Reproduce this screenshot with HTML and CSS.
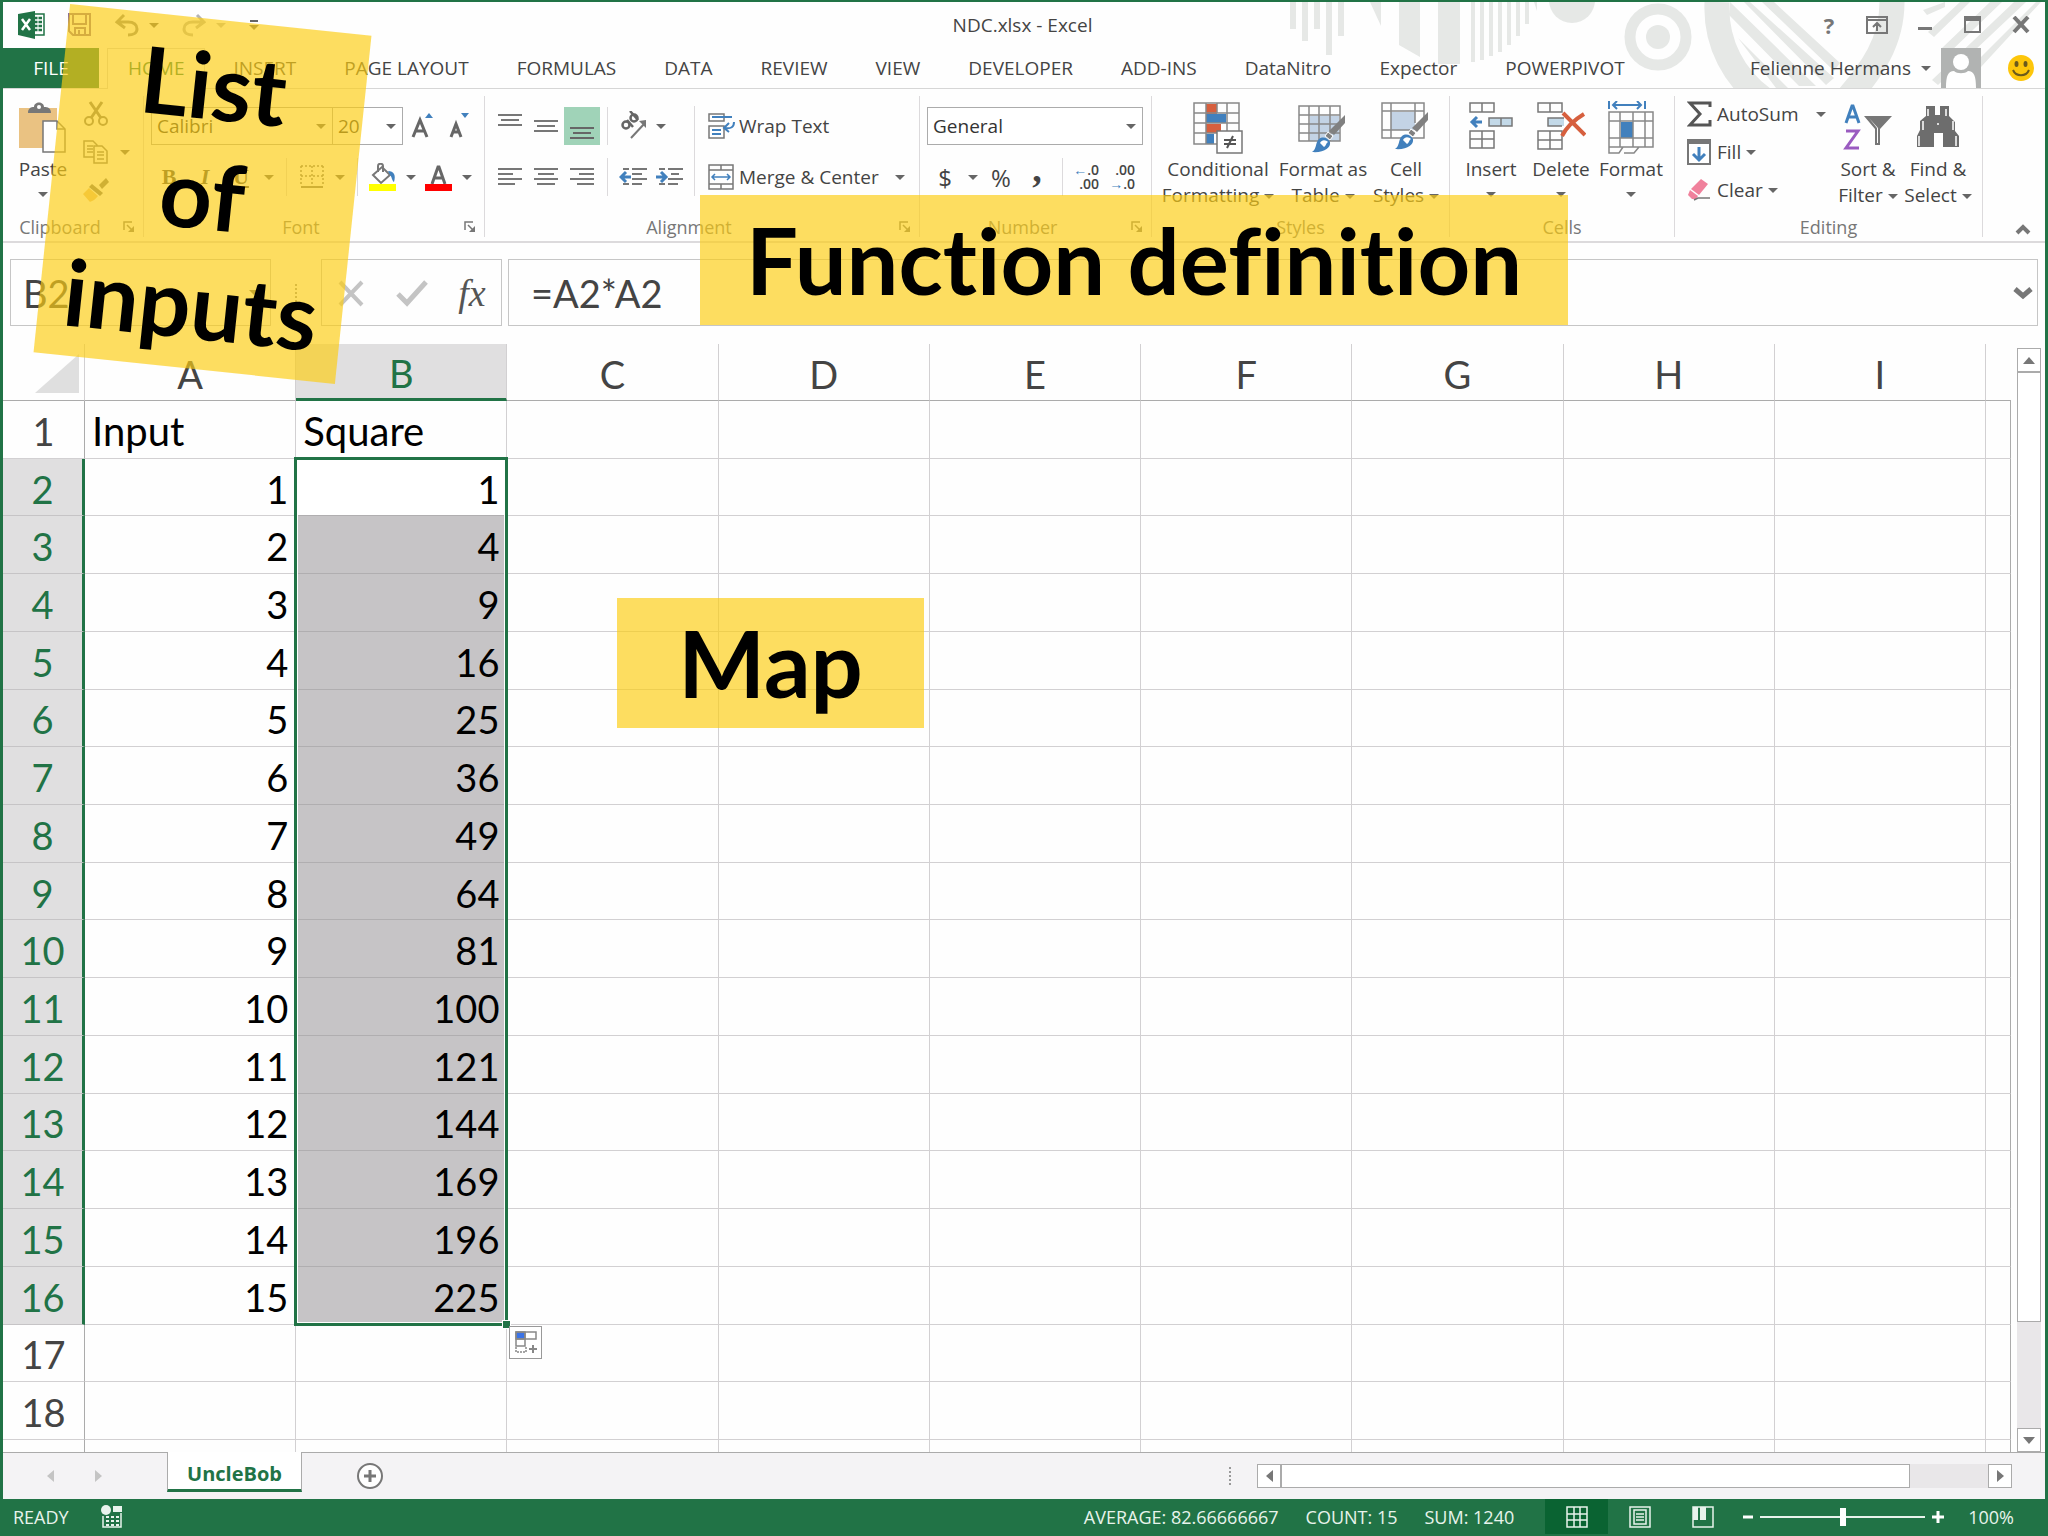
FILE: index.html
```html
<!DOCTYPE html>
<html lang="en">
<head>
    <meta charset="UTF-8">
    <meta name="viewport" content="width=device-width, initial-scale=1.0">
    <title>NDC.xlsx - Excel</title>
    <link rel="stylesheet" href="styles.css">
</head>
<body>
<svg class="defs" aria-hidden="true">
    <symbol id="launcher" viewBox="0 0 12 12">
        <path d="M1 9V1h8" fill="none" stroke="#777" stroke-width="1.5"/>
        <path d="M4 4l5 5" stroke="#777" stroke-width="1.5"/>
        <path d="M11 5v6H5z" fill="#777"/>
    </symbol>
    <symbol id="brush" viewBox="0 0 34 38">
        <path d="M33 0v8L22 20l-5-4z" fill="#808080"/>
        <path d="M16 17l5 4-3 4-5-4z" fill="#808080" stroke="#fff"/>
        <path d="M0 37c5-3 3-9 7-13 4-3 9-1 11 3 1 6-6 11-18 10z" fill="#4180bd"/>
        <path d="M8 28c2-4 6-3 8-1-2 1-2 4-4 5z" fill="#fff"/>
    </symbol>
</svg>
<div class="window">
    <header class="top">
        <svg class="deco" viewBox="1270 2 775 86" aria-hidden="true">
            <g fill="#e6e8e6">
                <path d="M1290 2h6v27h-6zM1302 2h6v39h-6zM1314 2h6v27h-6zM1326 2h6v53h-6zM1338 2h6v34h-6zM1370 2h11v24z"/>
                <path d="M1399 2h21v55l-21-12zM1438 2h22v62h-22zM1471 2h4v60h-4zM1480 2h4v58h-4zM1489 2h4v54h-4zM1498 2h4v50h-4zM1507 2h4v43h-4zM1516 2h4v34h-4zM1525 2h4v22h-4zM1534 2h3v9z"/>
                <circle cx="1572" cy="0" r="23"/>
                <circle cx="1658" cy="37" r="12"/>
                <path d="M1730 2l86 84h-17l-70-71zM1750 2l84 76-8 7-82-83zM1774 2l66 61-6 8-72-69zM1738 38l50 50h-12z"/>
                <path d="M1945 2l-22 8 4 5 18-8zM1960 2l-32 30 6 5 36-35zM1990 2l-48 46 6 6 54-52zM2014 2l-82 78 6 5 88-83zM2036 2l-60 60 5 5 60-65z"/>
            </g>
            <circle cx="1658" cy="37" r="28" fill="none" stroke="#e6e8e6" stroke-width="11"/>
            <path d="M1717 2c-2 42 18 77 48 98M1892 2c0 40-20 68-46 98" fill="none" stroke="#e6e8e6" stroke-width="25"/>
        </svg>
        <div class="titlebar">
            <div class="quick">
                <svg width="28" height="28" viewBox="0 0 28 28"><path d="M12 3h14v21H12z" fill="#fff" stroke="#217346" stroke-width="1.5"/><path d="M15 7h9M15 11h9M15 15h9M15 19h9" stroke="#217346" stroke-width="2.5"/><path d="M20 4v18" stroke="#fff"/><path d="M0 3l17-3v28L0 24z" fill="#217346"/><path d="M4 8l8 11M12 8L4 19" stroke="#fff" stroke-width="2.5"/></svg>
                <button class="q-save" aria-label="Save"><svg width="24" height="24" viewBox="0 0 24 24" fill="none" stroke="#8a6d9c" stroke-width="2"><path d="M1 1h21v21H5l-4-4zM5 1v10h13V1M7 22v-7h10v7M11 17v5"/></svg></button>
                <button class="q-undo" aria-label="Undo"><svg width="24" height="24" viewBox="0 0 24 24" fill="none" stroke="#8a8a8a" stroke-width="3"><path d="M9 2L2 9l8 6M3 9h10c6 0 9 3 9 7s-4 6-9 6"/></svg><span class="caret"></span></button>
                <button class="q-redo" aria-label="Redo"><svg width="24" height="24" viewBox="0 0 24 24" fill="none" stroke="#b5b5b5" stroke-width="3"><path d="M15 2l7 7-8 6M21 9H11c-6 0-9 3-9 7s4 6 9 6"/></svg><span class="caret light"></span></button>
                <button class="q-more" aria-label="Customize Quick Access Toolbar"><span class="bar"></span><span class="caret"></span></button>
            </div>
            <div class="title">NDC.xlsx - Excel</div>
            <div class="wincontrols">
                <button class="help" aria-label="Help">?</button>
                <button aria-label="Ribbon display options"><svg width="22" height="18" viewBox="0 0 22 18" fill="none" stroke="#777" stroke-width="2"><path d="M1 1h20v16H1zM1 4h20M11 15V8M7 11l4-4 4 4"/></svg></button>
                <button aria-label="Minimize"><svg width="16" height="18" viewBox="0 0 16 18"><path d="M1 11h14v3H1z" fill="#777"/></svg></button>
                <button aria-label="Maximize"><svg width="18" height="18" viewBox="0 0 18 18"><path d="M1 1h15v15H1z" fill="none" stroke="#777" stroke-width="2"/><path d="M1 1h15v4H1z" fill="#777"/></svg></button>
                <button aria-label="Close"><svg width="18" height="18" viewBox="0 0 18 18"><path d="M2 1l14 15M16 1L2 16" stroke="#777" stroke-width="4"/></svg></button>
            </div>
        </div>
        <nav class="tabs">
            <a href="#" class="file">FILE</a>
            <a href="#" class="active">HOME</a>
            <a href="#">INSERT</a>
            <a href="#">PAGE LAYOUT</a>
            <a href="#">FORMULAS</a>
            <a href="#">DATA</a>
            <a href="#">REVIEW</a>
            <a href="#">VIEW</a>
            <a href="#">DEVELOPER</a>
            <a href="#">ADD-INS</a>
            <a href="#">DataNitro</a>
            <a href="#">Expector</a>
            <a href="#">POWERPIVOT</a>
            <div class="account">
                <button>Felienne Hermans<span class="caret"></span></button>
                <svg width="40" height="40" viewBox="0 0 40 40"><path d="M0 0h40v40H0z" fill="#b1b3b2"/><circle cx="20" cy="14" r="8" fill="#fff"/><path d="M5 40c0-12 2-17 8-17 3 3 11 3 14 0 6 0 8 5 8 17z" fill="#fff"/></svg>
                <svg width="28" height="28" viewBox="0 0 28 28"><circle cx="14" cy="14" r="13" fill="#fdc60b"/><ellipse cx="9.500" cy="10" rx="2" ry="3" fill="#6b5a1c"/><ellipse cx="18.500" cy="10" rx="2" ry="3" fill="#6b5a1c"/><path d="M6 16c3 7 13 7 16 0" fill="none" stroke="#6b5a1c" stroke-width="2"/></svg>
            </div>
        </nav>
    </header>

    <section class="ribbon">
        <div class="group clipboard">
            <div class="body">
                <button class="big"><svg width="48" height="52" viewBox="0 0 48 52"><path d="M0 6h38v40H0z" fill="#eac282"/><path d="M9 11c0-5 3-6 6-6 0-6 10-6 10 0 4 0 7 1 7 6z" fill="#777"/><circle cx="20" cy="5" r="2" fill="#fff"/><path d="M24 19h14l8 8v23H24z" fill="#fff" stroke="#777" stroke-width="1.500"/><path d="M38 19v8h8" fill="none" stroke="#777" stroke-width="1.500"/></svg>Paste<span class="caret"></span></button>
                <div class="stack">
                    <button aria-label="Cut"><svg width="26" height="26" viewBox="0 0 26 26" fill="none" stroke="#777" stroke-width="2"><circle cx="6" cy="20" r="4"/><circle cx="20" cy="20" r="4"/><path d="M8 17L19 1M18 17L7 1" stroke-width="3"/></svg></button>
                    <button aria-label="Copy"><svg width="26" height="26" viewBox="0 0 26 26" fill="#fff" stroke="#777" stroke-width="1.500"><path d="M1 2h9l4 4v12H1zM4 7h6M4 10h6M4 13h6"/><path d="M11 7h8l5 5v12H11zM14 13h7M14 16h7M14 20h7"/></svg><span class="caret"></span></button>
                    <button aria-label="Format Painter"><svg width="26" height="26" viewBox="0 0 26 26"><path d="M16 8l7-7 3 4-7 7z" fill="#777"/><path d="M9 7l11 9-3 3L6 10z" fill="#777"/><path d="M6 11l9 8c-3 4-6 5-8 6l-7-8z" fill="#eac282"/></svg></button>
                </div>
            </div>
            <div class="label"><span>Clipboard</span><button aria-label="Clipboard settings"><svg width="12" height="12"><use href="#launcher"/></svg></button></div>
        </div>

        <div class="group font">
            <div class="rows">
                <div class="row">
                    <label class="combo fontname"><select aria-label="Font"><option>Calibri</option></select><span class="caret"></span></label>
                    <label class="combo fontsize"><select aria-label="Font size"><option>20</option></select><span class="caret"></span></label>
                    <button class="tool" aria-label="Increase font size"><svg width="24" height="28" viewBox="0 0 24 28"><path d="M2 25L9 8l7 17M4 19h10" fill="none" stroke="#666" stroke-width="3"/><path d="M14 6l4-5 4 5z" fill="#4180bd"/></svg></button>
                    <button class="tool" aria-label="Decrease font size"><svg width="24" height="28" viewBox="0 0 24 28"><path d="M4 25l5-13 5 13M5 20h8" fill="none" stroke="#666" stroke-width="3"/><path d="M14 1h8l-4 5z" fill="#4180bd"/></svg></button>
                </div>
                <div class="row">
                    <button class="tool bold">B</button>
                    <button class="tool italic">I</button>
                    <button class="tool underline">U</button>
                    <button class="drop" aria-label="Underline options"><span class="caret"></span></button>
                    <span class="sep"></span>
                    <button class="tool" aria-label="Borders"><svg width="24" height="24" viewBox="0 0 24 24" fill="none" stroke="#777"><path d="M1 1h22M1 11h22M1 1v20M12 1v20M23 1v20" stroke-dasharray="2 2" stroke-width="1.500"/><path d="M1 22h22" stroke-width="2"/></svg></button>
                    <button class="drop" aria-label="Border options"><span class="caret"></span></button>
                    <span class="sep"></span>
                    <button class="tool" aria-label="Fill color"><svg width="28" height="28" viewBox="0 0 28 28"><path d="M4 12l9-8 8 8-9 8z" fill="#fff" stroke="#777" stroke-width="2"/><path d="M9 9V3c0-3 5-3 5 0v6" fill="none" stroke="#777" stroke-width="2"/><path d="M19 8c6 0 8 4 6 11-2-1-2-5-4-7z" fill="#4180bd"/><path d="M0 21h27v7H0z" fill="#ff0"/></svg></button>
                    <button class="drop" aria-label="Fill color options"><span class="caret"></span></button>
                    <button class="tool" aria-label="Font color"><svg width="28" height="28" viewBox="0 0 28 28"><path d="M7 21l6-17h1l6 17M9 15h9" fill="none" stroke="#666" stroke-width="3"/><path d="M0 21h27v7H0z" fill="red"/></svg></button>
                    <button class="drop" aria-label="Font color options"><span class="caret"></span></button>
                </div>
            </div>
            <div class="label"><span>Font</span><button aria-label="Font settings"><svg width="12" height="12"><use href="#launcher"/></svg></button></div>
        </div>

        <div class="group alignment">
            <div class="body">
                <div class="rows">
                    <div class="row">
                        <button class="tool" aria-label="Top align"><svg width="24" height="28" viewBox="0 0 24 28" stroke="#777" stroke-width="2"><path d="M0 3h24M3 8h18M0 13h24"/></svg></button>
                        <button class="tool" aria-label="Middle align"><svg width="24" height="28" viewBox="0 0 24 28" stroke="#777" stroke-width="2"><path d="M0 9h24M3 14h18M0 19h24"/></svg></button>
                        <button class="tool on" aria-label="Bottom align"><svg width="24" height="28" viewBox="0 0 24 28" stroke="#666" stroke-width="2"><path d="M0 16h24M3 21h18M0 26h24"/></svg></button>
                        <span class="sep"></span>
                        <button class="tool" aria-label="Orientation"><svg width="30" height="30" viewBox="0 0 30 30"><g fill="none" stroke="#666" stroke-width="2.500"><circle cx="8" cy="14" r="3.500"/><path d="M9 9l6 7"/><circle cx="16" cy="7" r="3.500"/><path d="M12 0l8 9"/></g><path d="M13 27L27 12" stroke="#777" stroke-width="2"/><path d="M28 9v8l-7-7z" fill="#777"/></svg></button>
                        <button class="drop" aria-label="Orientation options"><span class="caret"></span></button>
                    </div>
                    <div class="row">
                        <button class="tool" aria-label="Align left"><svg width="24" height="20" viewBox="0 0 24 20" stroke="#777" stroke-width="2"><path d="M0 2h24M0 7h15M0 12h24M0 17h17"/></svg></button>
                        <button class="tool" aria-label="Center"><svg width="24" height="20" viewBox="0 0 24 20" stroke="#777" stroke-width="2"><path d="M0 2h24M4 7h16M0 12h24M3 17h18"/></svg></button>
                        <button class="tool" aria-label="Align right"><svg width="24" height="20" viewBox="0 0 24 20" stroke="#777" stroke-width="2"><path d="M0 2h24M9 7h15M0 12h24M7 17h17"/></svg></button>
                        <span class="sep"></span>
                        <button class="tool" aria-label="Decrease indent"><svg width="28" height="20" viewBox="0 0 28 20" stroke="#777" stroke-width="2"><path d="M4 2h6M13 2h15M13 7h10M13 12h15M4 17h6M13 17h10"/><path d="M12 10H3M7 5l-5 5 5 5" fill="none" stroke="#4180bd" stroke-width="3"/></svg></button>
                        <button class="tool" aria-label="Increase indent"><svg width="28" height="20" viewBox="0 0 28 20" stroke="#777" stroke-width="2"><path d="M4 2h6M13 2h15M16 7h8M13 12h15M4 17h6M13 17h10"/><path d="M1 10h9M6 5l5 5-5 5" fill="none" stroke="#4180bd" stroke-width="3"/></svg></button>
                    </div>
                </div>
                <span class="sep tall"></span>
                <div class="rows">
                    <div class="row"><button class="text"><svg width="27" height="26" viewBox="0 0 27 26" fill="none" stroke="#777" stroke-width="1.500"><path d="M1 1h15v7H1zM1 13h15v12H1z"/><path d="M4 4h20M4 17h9M4 21h9M26 9c0 5-3 7-9 6M21 10l-5 5 5 4" stroke="#4180bd" stroke-width="2"/></svg>Wrap Text</button></div>
                    <div class="row"><button class="text"><svg width="27" height="26" viewBox="0 0 27 26" fill="none" stroke="#777" stroke-width="1.500"><path d="M1 1h24v24H1zM1 6h24M1 20h24M13 1v5M13 20v5"/><path d="M4 13h18M7 10l-3 3 3 3M19 10l3 3-3 3" stroke="#4180bd"/></svg>Merge &amp; Center<span class="caret far"></span></button></div>
                </div>
            </div>
            <div class="label"><span>Alignment</span><button aria-label="Alignment settings"><svg width="12" height="12"><use href="#launcher"/></svg></button></div>
        </div>

        <div class="group number">
            <div class="rows">
                <div class="row"><label class="combo format"><select aria-label="Number format"><option>General</option></select><span class="caret"></span></label></div>
                <div class="row">
                    <button class="tool sign">$</button>
                    <button class="drop" aria-label="Accounting options"><span class="caret"></span></button>
                    <button class="tool sign">%</button>
                    <button class="tool comma">,</button>
                    <span class="sep"></span>
                    <button class="tool decimals" aria-label="Increase decimal"><span><i>←</i>.0</span><span>.00</span></button>
                    <button class="tool decimals" aria-label="Decrease decimal"><span>.00</span><span><i>→</i>.0</span></button>
                </div>
            </div>
            <div class="label"><span>Number</span><button aria-label="Number settings"><svg width="12" height="12"><use href="#launcher"/></svg></button></div>
        </div>

        <div class="group style">
            <div class="body">
                <button class="big conditional"><svg width="50" height="52" viewBox="0 0 50 52"><path d="M13 2h11v10H13zM13 22h15v9H13z" fill="#d65f3e"/><path d="M13 12h20v9H13zM13 32h8v10h-8z" fill="#4180bd"/><path d="M1 1h45v41H1zM1 11h45M1 21h45M1 31h45M13 1v41M24 1v10M34 1v30" fill="none" stroke="#888" stroke-width="1.500"/><path d="M24 29h25v22H24z" fill="#fff" stroke="#777" stroke-width="1.500"/><path d="M31 38h12M31 42h12M40 34l-6 12" stroke="#555" stroke-width="2"/></svg><span>Conditional</span><span>Formatting<i class="caret"></i></span></button>
                <button class="big formatas"><svg width="50" height="52" viewBox="0 0 50 52"><path d="M12 14h29v25H12z" fill="#c3d3e5"/><path d="M1 4h41v35H1zM1 13h41M1 22h41M1 31h41M11 4v35M21 4v35M32 4v35" fill="none" stroke="#888" stroke-width="1.500"/><use href="#brush" x="13" y="13" width="36" height="38"/></svg><span>Format as</span><span>Table<i class="caret"></i></span></button>
                <button class="big cellstyles"><svg width="50" height="52" viewBox="0 0 50 52"><path d="M10 10h24v18H10z" fill="#c3d3e5"/><path d="M1 1h42v35H1zM1 9h42M1 28h30M10 1v35M34 1v20" fill="none" stroke="#888" stroke-width="1.500"/><use href="#brush" x="13" y="10" width="36" height="38"/></svg><span>Cell</span><span>Styles<i class="caret"></i></span></button>
            </div>
            <div class="label plain">Styles</div>
        </div>

        <div class="group cells">
            <div class="body">
                <button class="big"><svg width="46" height="52" viewBox="0 0 46 52"><path d="M21 16h23v8H21z" fill="#c3d9e8"/><path d="M2 1h24v9H2zM14 1v9M21 16h23v8H21zM33 16v8M2 29h24v17H2zM2 37h24M14 29v17" fill="none" stroke="#777" stroke-width="1.500"/><path d="M14 20H5M9 15l-5 5 5 5" fill="none" stroke="#4180bd" stroke-width="3"/></svg>Insert<span class="caret"></span></button>
                <button class="big"><svg width="50" height="52" viewBox="0 0 50 52"><path d="M12 16h16v8H12z" fill="#c3d9e8"/><path d="M2 1h24v9H2zM14 1v9M28 16H12v8h14M2 29h24v18H2zM2 38h24M14 29v18" fill="none" stroke="#777" stroke-width="1.500"/><path d="M27 11l22 22M48 12C38 18 30 26 26 34" fill="none" stroke="#d65f3e" stroke-width="4"/></svg>Delete<span class="caret"></span></button>
                <button class="big"><svg width="48" height="54" viewBox="0 0 48 54"><path d="M14 21h12v16H14z" fill="#4180bd"/><path d="M2 11h44v35H2zM2 20h44M2 37h44M13 11v35M26 11v35M38 11v35M2 46v6h10l4-6M17 52h10l5-6" fill="none" stroke="#888" stroke-width="1.500"/><path d="M2 0v8M38 0v8M6 4h28M10 0L6 4l4 4M30 0l4 4-4 4" fill="none" stroke="#4180bd" stroke-width="2"/></svg>Format<span class="caret"></span></button>
            </div>
            <div class="label plain">Cells</div>
        </div>

        <div class="group editing">
            <div class="body">
                <div class="stack">
                    <button><svg width="25" height="26" viewBox="0 0 25 26"><path d="M23 6V2H3l10 11L3 24h20v-5" fill="none" stroke="#555" stroke-width="3"/></svg>AutoSum<span class="caret far"></span></button>
                    <button><svg width="25" height="26" viewBox="0 0 25 26"><path d="M1 1h22v24H1z" fill="#fff" stroke="#777" stroke-width="2"/><path d="M1 1h22v4H1z" fill="#777"/><path d="M12 8v12M6 15l6 6 6-6" fill="none" stroke="#4180bd" stroke-width="3"/></svg>Fill<span class="caret"></span></button>
                    <button><svg width="25" height="26" viewBox="0 0 25 26"><path d="M14 2l7 5-9 11-8-6z" fill="#f0819c"/><path d="M3 13l8 6-2 3H5l-4-4z" fill="#f0819c"/><path d="M7 23l4-2h12" fill="none" stroke="#777" stroke-width="1.500"/></svg>Clear<span class="caret"></span></button>
                </div>
                <button class="big"><svg width="50" height="52" viewBox="0 0 50 52"><path d="M3 21l6-17h1l6 17M5 15h9" fill="none" stroke="#4180bd" stroke-width="3"/><path d="M3 29h12L3 46h13" fill="none" stroke="#9a5bc0" stroke-width="3"/><path d="M21 14h28L37 27v16h-5V27z" fill="#777"/><path d="M26 16l8 10v15h1V26" fill="#fff"/></svg><span>Sort &amp;</span><span>Filter<i class="caret"></i></span></button>
                <button class="big"><svg width="46" height="52" viewBox="0 0 46 52"><path d="M11 4h9v9h5V4h9v10l6 6v9l4 5v11H28V31h-9v14H2V34l3-6v-9l6-5z" fill="#6d6d6d"/><path d="M13 7v7M8 19v9M4 34v10M31 7v7M38 19v9M41 34v10M22 22h2" stroke="#fff" stroke-width="1.500"/></svg><span>Find &amp;</span><span>Select<i class="caret"></i></span></button>
            </div>
            <div class="label plain">Editing</div>
        </div>
        <button class="collapse" aria-label="Collapse the ribbon"><svg width="16" height="12" viewBox="0 0 16 12"><path d="M2 10l6-6 6 6" fill="none" stroke="#777" stroke-width="4"/></svg></button>
    </section>

    <section class="formulabar">
        <div class="namebox"><input type="text" aria-label="Name box" value="B2"><button aria-label="Names"><span class="caret"></span></button></div>
        <span class="grip"></span>
        <div class="entry">
            <button aria-label="Cancel"><svg width="28" height="28" viewBox="0 0 28 28"><path d="M3 3l22 23M25 3L3 26" stroke="#c4c4c4" stroke-width="4"/></svg></button>
            <button aria-label="Enter"><svg width="32" height="28" viewBox="0 0 32 28"><path d="M2 15l9 9L30 3" fill="none" stroke="#c4c4c4" stroke-width="5"/></svg></button>
            <button class="fx">fx</button>
        </div>
        <div class="formula"><input type="text" aria-label="Formula" value="=A2*A2"><button aria-label="Expand formula bar"><svg width="20" height="14" viewBox="0 0 20 14"><path d="M2 3l8 7 8-7" fill="none" stroke="#777" stroke-width="5"/></svg></button></div>
    </section>

    <main class="sheet">
        <div class="gridwrap">
            <table class="grid">
                <colgroup><col class="c-head"><col><col><col><col><col><col><col><col><col><col class="c-last"></colgroup>
                <thead>
                    <tr><th class="corner"><svg width="46" height="40" viewBox="0 0 46 40"><path d="M45 0v39H1z" fill="#dfdfdf"/></svg></th><th>A</th><th class="hot">B</th><th>C</th><th>D</th><th>E</th><th>F</th><th>G</th><th>H</th><th>I</th><th></th></tr>
                </thead>
                <tbody>
                    <tr><th>1</th><td class="txt">Input</td><td class="txt">Square</td><td></td><td></td><td></td><td></td><td></td><td></td><td></td><td></td></tr>
                    <tr class="in"><th>2</th><td>1</td><td class="sel first">1</td><td></td><td></td><td></td><td></td><td></td><td></td><td></td><td></td></tr>
                    <tr class="in"><th>3</th><td>2</td><td class="sel">4</td><td></td><td></td><td></td><td></td><td></td><td></td><td></td><td></td></tr>
                    <tr class="in"><th>4</th><td>3</td><td class="sel">9</td><td></td><td></td><td></td><td></td><td></td><td></td><td></td><td></td></tr>
                    <tr class="in"><th>5</th><td>4</td><td class="sel">16</td><td></td><td></td><td></td><td></td><td></td><td></td><td></td><td></td></tr>
                    <tr class="in"><th>6</th><td>5</td><td class="sel">25</td><td></td><td></td><td></td><td></td><td></td><td></td><td></td><td></td></tr>
                    <tr class="in"><th>7</th><td>6</td><td class="sel">36</td><td></td><td></td><td></td><td></td><td></td><td></td><td></td><td></td></tr>
                    <tr class="in"><th>8</th><td>7</td><td class="sel">49</td><td></td><td></td><td></td><td></td><td></td><td></td><td></td><td></td></tr>
                    <tr class="in"><th>9</th><td>8</td><td class="sel">64</td><td></td><td></td><td></td><td></td><td></td><td></td><td></td><td></td></tr>
                    <tr class="in"><th>10</th><td>9</td><td class="sel">81</td><td></td><td></td><td></td><td></td><td></td><td></td><td></td><td></td></tr>
                    <tr class="in"><th>11</th><td>10</td><td class="sel">100</td><td></td><td></td><td></td><td></td><td></td><td></td><td></td><td></td></tr>
                    <tr class="in"><th>12</th><td>11</td><td class="sel">121</td><td></td><td></td><td></td><td></td><td></td><td></td><td></td><td></td></tr>
                    <tr class="in"><th>13</th><td>12</td><td class="sel">144</td><td></td><td></td><td></td><td></td><td></td><td></td><td></td><td></td></tr>
                    <tr class="in"><th>14</th><td>13</td><td class="sel">169</td><td></td><td></td><td></td><td></td><td></td><td></td><td></td><td></td></tr>
                    <tr class="in"><th>15</th><td>14</td><td class="sel">196</td><td></td><td></td><td></td><td></td><td></td><td></td><td></td><td></td></tr>
                    <tr class="in"><th>16</th><td>15</td><td class="sel last">225<span class="handle"></span><button class="autofill" aria-label="Auto fill options"><svg width="24" height="24" viewBox="0 0 24 24" fill="none" stroke="#888" stroke-width="1.500"><path d="M2 2h9v7H2z" fill="#3b73e6"/><path d="M2 2h20v7H2zM11 2v7M2 9v7h9V9"/><path d="M2 17v5h10v-5" stroke-dasharray="2 1"/><path d="M15 19h8M19 15v8" stroke-width="2"/></svg></button></td><td></td><td></td><td></td><td></td><td></td><td></td><td></td><td></td></tr>
                    <tr><th>17</th><td></td><td></td><td></td><td></td><td></td><td></td><td></td><td></td><td></td><td></td></tr>
                    <tr><th>18</th><td></td><td></td><td></td><td></td><td></td><td></td><td></td><td></td><td></td><td></td></tr>
                    <tr class="cut"><th></th><td></td><td></td><td></td><td></td><td></td><td></td><td></td><td></td><td></td><td></td></tr>
                </tbody>
            </table>
        </div>
        <div class="vscroll">
            <button aria-label="Scroll up"><span class="tri up"></span></button>
            <div class="track"><div class="thumb"></div></div>
            <button aria-label="Scroll down"><span class="tri down"></span></button>
        </div>
    </main>

    <div class="sheettabs">
        <button class="nav" aria-label="Previous sheet"><span class="tri left"></span></button>
        <button class="nav" aria-label="Next sheet"><span class="tri right"></span></button>
        <a href="#" class="sheettab">UncleBob</a>
        <button class="add" aria-label="New sheet"><svg width="28" height="28" viewBox="0 0 28 28"><circle cx="14" cy="14" r="12" fill="#fff" stroke="#777" stroke-width="2"/><path d="M14 8v12M8 14h12" stroke="#777" stroke-width="3"/></svg></button>
        <span class="grip"></span>
        <div class="hscroll">
            <button aria-label="Scroll left"><span class="tri left"></span></button>
            <div class="track"><div class="thumb"></div></div>
            <button aria-label="Scroll right"><span class="tri right"></span></button>
        </div>
    </div>

    <footer class="status">
        <span>READY</span>
        <svg class="macro" width="22" height="24" viewBox="0 0 22 24"><circle cx="5" cy="5" r="5" fill="#e8f3ec"/><path d="M12 1h9v6h-9z" fill="#e8f3ec"/><path d="M2 11v11h18V8" fill="none" stroke="#e8f3ec" stroke-width="1.500"/><path d="M5 12h13M5 16h13M5 20h13" stroke="#e8f3ec" stroke-width="2" stroke-dasharray="3 2"/></svg>
        <div class="sums"><span>AVERAGE: 82.66666667</span><span>COUNT: 15</span><span>SUM: 1240</span></div>
        <div class="views">
            <button class="current" aria-label="Normal view"><svg width="22" height="22" viewBox="0 0 22 22"><path d="M1 1h20v20H1zM1 8h20M1 14h20M8 1v20M14 1v20" fill="none" stroke="#e8f3ec" stroke-width="1.500"/></svg></button>
            <button aria-label="Page layout view"><svg width="22" height="22" viewBox="0 0 22 22"><path d="M1 1h20v20H1zM5 4h12v14H5zM7 8h8M7 11h8M7 14h8" fill="none" stroke="#e8f3ec" stroke-width="1.500"/></svg></button>
            <button aria-label="Page break view"><svg width="22" height="22" viewBox="0 0 22 22"><path d="M1 1h20v20H1z" fill="none" stroke="#e8f3ec" stroke-width="1.500"/><path d="M1 1h5v13H1zM8 1h6v13H8z" fill="#e8f3ec"/></svg></button>
        </div>
        <div class="zoom">
            <button aria-label="Zoom out"><svg width="14" height="14" viewBox="0 0 14 14"><path d="M2 7h10" stroke="#fff" stroke-width="3"/></svg></button>
            <input type="range" min="0" max="100" value="50" aria-label="Zoom">
            <button aria-label="Zoom in"><svg width="14" height="14" viewBox="0 0 14 14"><path d="M1 7h12M7 1v12" stroke="#fff" stroke-width="3"/></svg></button>
            <span>100%</span>
        </div>
    </footer>

    <div class="note note-inputs">List<br>of<br>inputs</div>
    <div class="note note-function">Function definition</div>
    <div class="note note-map">Map</div>
</div>
</body>
</html>
```
FILE: styles.css
```css
* {
    box-sizing: border-box;
}
body {
    margin: 0;
    font-family: "Open Sans", "Noto Sans", sans-serif;
    font-size: 19px;
    color: #444;
    background-color: #fff;
}
button {
    display: flex;
    align-items: center;
    justify-content: center;
    padding: 0;
    border: 0;
    background: none;
    font: inherit;
    color: inherit;
}
input, select {
    font: inherit;
    color: inherit;
    border: 0;
    background: none;
    padding: 0;
    min-width: 0;
}
svg {
    display: block;
    flex: none;
}
a {
    color: inherit;
    text-decoration: none;
}
.defs {
    position: absolute;
    width: 0;
    height: 0;
}
.window {
    position: relative;
    display: flex;
    flex-direction: column;
    height: 100vh;
    border: 3px solid #217346;
    border-top-width: 2px;
    border-bottom-width: 0;
    overflow: hidden;
    background-color: #fefefe;
}
.caret {
    display: inline-block;
    flex: none;
    width: 0;
    height: 0;
    border: 5px solid transparent;
    border-top: 5px solid #666;
    border-bottom: 0;
}
.caret.light {
    border-top-color: #bbb;
}

/* title bar and tabs */
.top {
    position: relative;
}
.deco {
    position: absolute;
    top: 0;
    right: 0;
    height: 86px;
    width: 775px;
}
.titlebar {
    position: relative;
    display: flex;
    align-items: center;
    height: 46px;
}
.quick, .wincontrols {
    flex: 1;
    display: flex;
    align-items: center;
}
.quick {
    padding-left: 15px;
}
.quick .q-save {
    margin-left: 22px;
}
.quick button {
    gap: 10px;
    margin-left: 23px;
}
.quick .q-more {
    flex-direction: column;
    gap: 3px;
}
.q-more .bar {
    width: 8px;
    height: 2px;
    background-color: #666;
}
.title {
    padding-right: 18px;
}
.wincontrols {
    justify-content: flex-end;
}
.wincontrols button {
    width: 48px;
    height: 30px;
}
.wincontrols .help {
    font-size: 22px;
    font-weight: 700;
    color: #777;
}
.tabs {
    position: relative;
    display: flex;
    height: 41px;
    border-bottom: 1px solid #d6d6d6;
}
.tabs a {
    padding: 0 24px;
    line-height: 41px;
    white-space: nowrap;
}
.tabs .file {
    width: 96px;
    padding: 0;
    margin-right: 8px;
    text-align: center;
    color: #fff;
    background-color: #217346;
}
.tabs .active {
    height: 41px;
    padding: 0 20px;
    margin-right: 4px;
    border: 1px solid #d6d6d6;
    border-bottom: 0;
    line-height: 39px;
    color: #217346;
    background-color: #fefefe;
}
.account {
    display: flex;
    align-items: center;
    margin-left: auto;
    margin-right: 10px;
}
.account button {
    gap: 10px;
    margin-right: 10px;
}
.account svg + svg {
    margin-left: 26px;
}

/* ribbon */
.ribbon {
    display: flex;
    height: 154px;
    padding: 7px 0 4px;
    border-bottom: 2px solid #dcdadc;
}
.group {
    display: flex;
    flex-direction: column;
    flex: none;
    border-right: 1px solid #dcdadc;
}
.clipboard { width: 141px; }
.font { width: 341px; }
.alignment { width: 435px; }
.number { width: 232px; }
.style { width: 298px; }
.cells { width: 225px; }
.editing { width: 308px; }
.body {
    display: flex;
    flex: 1;
}
.rows {
    display: flex;
    flex-direction: column;
    flex: 1;
    gap: 13px;
    padding-top: 11px;
}
.body .rows {
    flex: none;
}
.row {
    display: flex;
    height: 38px;
}
.font .rows, .number .rows {
    padding-left: 7px;
}
.alignment .body {
    padding-left: 7px;
}
.tool {
    width: 36px;
    height: 38px;
}
.tool.on {
    background-color: #a0d3b8;
}
.drop {
    width: 20px;
    height: 38px;
}
.sep {
    width: 1px;
    margin: 0 7px;
    background-color: #dcdadc;
}
.sep.tall {
    height: 90px;
    margin: 10px 7px 0;
}
.combo {
    position: relative;
    display: flex;
    align-items: center;
    border: 1px solid #ababab;
    background-color: #fff;
}
.combo select {
    appearance: none;
    width: 100%;
    height: 36px;
    padding-left: 5px;
    color: #333;
}
.combo .caret {
    position: absolute;
    right: 6px;
    pointer-events: none;
}
.fontname {
    width: 182px;
}
.fontsize {
    width: 71px;
    margin-left: -1px;
    margin-right: 2px;
}
.format {
    width: 216px;
}
.bold, .italic, .underline {
    font-family: "Liberation Serif", serif;
    font-size: 22px;
    font-weight: 700;
}
.italic {
    font-style: italic;
}
.underline {
    text-decoration: underline;
}
.sign {
    font-size: 24px;
}
.comma {
    padding-bottom: 16px;
    font-family: "Liberation Serif", serif;
    font-size: 38px;
    font-weight: 700;
    line-height: 22px;
}
.decimals {
    flex-direction: column;
    align-items: flex-end;
    padding-right: 7px;
    font-size: 14px;
    line-height: 14px;
    font-weight: 600;
}
.decimals i {
    font-style: normal;
    font-weight: 700;
    color: #4180bd;
}
.text {
    gap: 4px;
    padding-left: 6px;
    white-space: nowrap;
}
.text .far {
    margin-left: 12px;
}
.big {
    flex-direction: column;
    justify-content: flex-start;
    flex: none;
    width: 70px;
    padding-top: 5px;
    line-height: 26px;
    white-space: nowrap;
}
.big svg {
    height: 54px;
    margin-bottom: 1px;
}
.big > .caret {
    margin-top: 10px;
}
.big i.caret {
    margin-left: 5px;
    vertical-align: 3px;
}
.clipboard .big {
    width: 68px;
    margin-left: 6px;
}
.conditional {
    width: 110px;
    margin-left: 11px;
}
.formatas {
    width: 100px;
}
.cellstyles {
    width: 66px;
}
.cells .body {
    padding-left: 6px;
}
.stack {
    display: flex;
    flex-direction: column;
    gap: 2px;
}
.stack button {
    justify-content: flex-start;
    height: 36px;
    gap: 5px;
}
.clipboard .stack {
    padding-left: 6px;
}
.clipboard .stack button {
    gap: 11px;
}
.editing .stack {
    width: 158px;
    padding-left: 12px;
}
.stack .far {
    margin-left: 12px;
}
.label {
    display: flex;
    align-items: center;
    height: 20px;
    padding-right: 8px;
    font-size: 18px;
    line-height: 20px;
    color: #777;
}
.label span {
    flex: 1;
    text-align: center;
}
.label button {
    margin-left: 6px;
}
.label.plain {
    justify-content: center;
    padding-right: 0;
}
.collapse {
    align-self: flex-end;
    margin: 0 14px 2px auto;
}

/* formula bar */
.formulabar {
    display: flex;
    align-items: center;
    height: 101px;
    padding: 0 7px 2px;
}
.namebox, .entry, .formula {
    display: flex;
    align-items: center;
    height: 67px;
    border: 1px solid #c6c6c6;
    font-family: Lato, sans-serif;
    font-size: 38px;
}
.namebox {
    width: 261px;
}
.namebox input {
    flex: 1;
    padding-left: 12px;
}
.namebox button {
    width: 32px;
}
.grip {
    width: 2px;
    height: 18px;
    border-left: 2px dotted #999;
}
.formulabar .grip {
    margin: 0 24px;
}
.entry {
    width: 181px;
    justify-content: space-around;
    margin-right: 6px;
}
.fx {
    font-family: "Liberation Serif", serif;
    font-style: italic;
    color: #555;
}
.formula {
    flex: 1;
}
.formula input {
    flex: 1;
    padding-left: 22px;
}
.formula button {
    width: 28px;
}

/* sheet */
.sheet {
    display: flex;
    flex: 1;
    min-height: 0;
    border-bottom: 1px solid #ababab;
}
.gridwrap {
    flex: 1;
    min-width: 0;
}
.grid {
    width: 100%;
    height: 100%;
    table-layout: fixed;
    border-spacing: 0;
    font-family: Lato, sans-serif;
    font-size: 38px;
    line-height: 46px;
}
.c-head {
    width: 82px;
}
.c-last {
    width: 25px;
}
.grid th, .grid td {
    padding: 3px 0 0;
    font-weight: 400;
    border-right: 1px solid #d2d0d2;
    border-bottom: 1px solid #d2d0d2;
}
.grid td {
    padding-right: 7px;
    text-align: right;
    color: #000;
}
.grid td.txt {
    padding: 3px 0 0 7px;
    font-size: 40px;
    text-align: left;
}
.grid thead th {
    height: 57px;
    border-bottom-color: #ababab;
}
.grid thead th:last-child {
    border-right: 0;
}
.grid .corner {
    padding: 10px 5px 6px 31px;
}
.grid thead .hot {
    color: #217346;
    background-color: #e0dfe0;
    border-bottom: 3px solid #217346;
}
.grid tbody th, .grid tbody td:last-child {
    border-right-color: #ababab;
}
.grid .in th {
    color: #217346;
    background-color: #e0dfe0;
    border-right: 3px solid #217346;
    border-bottom-color: #c6c4c6;
}
.grid .sel {
    position: relative;
    background-color: #c6c4c6;
    border-bottom-color: #b0aeb0;
}
.grid .sel.first {
    background-color: #fff;
}
.sel::after {
    content: "";
    position: absolute;
    top: 0;
    bottom: -1px;
    left: -2px;
    right: -2px;
    border: 0 solid #217346;
    border-width: 0 3px;
    box-shadow: inset 1px 0 #fff, inset -1px 0 #fff;
}
.sel.first::after {
    top: -2px;
    border-top-width: 3px;
}
.sel.last::after {
    bottom: -2px;
    border-bottom-width: 3px;
    box-shadow: inset 1px 0 #fff, inset -1px -1px #fff;
}
.handle {
    position: absolute;
    right: -5px;
    bottom: -5px;
    z-index: 1;
    width: 9px;
    height: 9px;
    border: 1px solid #fff;
    background-color: #217346;
}
.autofill {
    position: absolute;
    left: 100%;
    top: 100%;
    z-index: 1;
    width: 33px;
    height: 33px;
    margin: 2px 0 0 3px;
    border: 1px solid #999;
    background-color: #fff;
}
.cut {
    height: 12px;
    line-height: 0;
}
.grid .cut th, .grid .cut td {
    border-bottom: 0;
}
.vscroll {
    display: flex;
    flex-direction: column;
    width: 34px;
    padding: 4px 4px 0 6px;
}
.vscroll button, .hscroll button {
    width: 24px;
    height: 24px;
    border: 1px solid #ababab;
    background-color: #fff;
}
.track {
    flex: 1;
    background-color: #e9e7e9;
}
.thumb {
    border: 1px solid #ababab;
    background-color: #fff;
}
.vscroll .thumb {
    height: 90%;
}
.tri {
    border: 6px solid transparent;
}
.tri.up {
    border-top: 0;
    border-bottom: 7px solid #777;
}
.tri.down {
    border-bottom: 0;
    border-top: 7px solid #777;
}
.tri.left {
    border-left: 0;
    border-right: 7px solid #777;
}
.tri.right {
    border-right: 0;
    border-left: 7px solid #777;
}

/* sheet tabs */
.sheettabs {
    display: flex;
    align-items: center;
    height: 46px;
    padding: 0 33px 0 23px;
    background-color: #f4f3f5;
}
.nav {
    width: 48px;
    height: 30px;
}
.nav .left {
    border-right-color: #c4c4c4;
}
.nav .right {
    border-left-color: #c4c4c4;
}
.sheettab {
    align-self: flex-start;
    width: 135px;
    height: 40px;
    margin: -1px 0 0 45px;
    border: 1px solid #ababab;
    border-top: 0;
    border-bottom: 3px solid #217346;
    font-size: 20px;
    font-weight: 700;
    line-height: 43px;
    text-align: center;
    color: #217346;
    background-color: #fff;
}
.add {
    margin-left: 54px;
}
.sheettabs .grip {
    margin-left: auto;
    margin-right: 26px;
}
.hscroll {
    display: flex;
    width: 756px;
    max-width: 38%;
}
.hscroll .thumb {
    width: 89%;
    height: 24px;
}

/* status bar */
.status {
    display: flex;
    align-items: center;
    height: 37px;
    padding: 0 31px 2px 10px;
    font-size: 18px;
    color: #e8f3ec;
    background-color: #217346;
}
.macro {
    margin-left: 32px;
}
.sums {
    display: flex;
    gap: 27px;
    margin-left: auto;
    margin-right: 31px;
}
.views {
    display: flex;
}
.views button {
    width: 63px;
    height: 35px;
}
.views .current {
    background-color: #0a6332;
}
.zoom {
    display: flex;
    align-items: center;
    margin-left: 7px;
}
.zoom input {
    appearance: none;
    width: 165px;
    height: 20px;
    margin: 0 6px 0 5px;
    background: linear-gradient(#e8f3ec, #e8f3ec) center / 100% 2px no-repeat;
}
.zoom input::-webkit-slider-thumb {
    appearance: none;
    width: 6px;
    height: 18px;
    background-color: #fff;
}
.zoom span {
    margin-left: 23px;
}

/* sticky notes laid over the sheet */
.note {
    position: absolute;
    z-index: 2;
    display: flex;
    align-items: center;
    justify-content: center;
    font-family: Lato, sans-serif;
    font-size: 92px;
    font-weight: 700;
    font-variant-ligatures: none;
    line-height: 110px;
    text-align: center;
    white-space: nowrap;
    color: #000;
    background-color: rgba(252, 204, 18, 0.67);
}
.note-inputs {
    left: 48px;
    top: 17px;
    width: 303px;
    height: 350px;
    display: block;
    padding-top: 10px;
    transform: rotate(6deg);
}
.note-function {
    left: 697px;
    top: 193px;
    width: 868px;
    height: 130px;
}
.note-map {
    left: 614px;
    top: 596px;
    width: 307px;
    height: 130px;
}
```
